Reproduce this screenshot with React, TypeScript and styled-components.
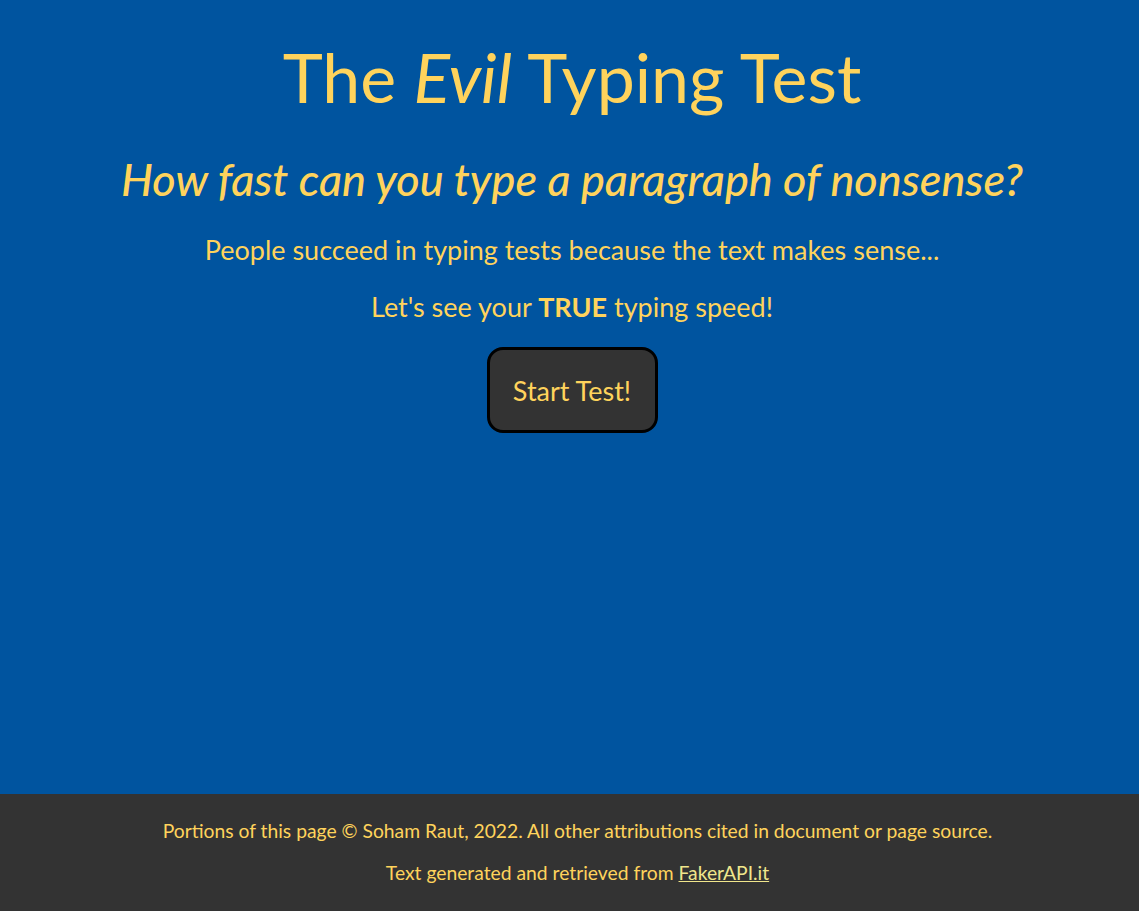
import React from "react";
import styled, { createGlobalStyle } from "styled-components";

const Global = createGlobalStyle`
  html, body { margin: 0; padding: 0; background: #333333; }
  body { font-family: Lato, "Open Sans", sans-serif; color: #ffd35c; }
`;

const Page = styled.div`
  display: flex;
  flex-direction: column;
  min-height: 911px;
`;

const Main = styled.main`
  background: #00549f;
  height: 794px;
  box-sizing: border-box;
  padding-left: 5px;
  display: flex;
  flex-direction: column;
  align-items: center;
  text-align: center;
`;

const Title = styled.h1`
  margin: 37px 0 0;
  font-size: 68px;
  font-weight: 400;
  line-height: 80px;
`;

const Subtitle = styled.h2`
  margin: 34px 0 0;
  font-size: 45px;
  font-style: italic;
  font-weight: 500;
  line-height: 56px;
`;

const Text = styled.p<{ $top: number }>`
  margin: ${(p) => p.$top}px 0 0;
  font-size: 27px;
  line-height: 30px;
`;

const Button = styled.button`
  margin-top: 25px;
  width: 171px;
  height: 86px;
  box-sizing: border-box;
  background: #333333;
  border: 3px solid #000;
  border-radius: 16px;
  color: #ffd35c;
  font-family: inherit;
  font-size: 27px;
  cursor: pointer;
`;

const Footer = styled.footer`
  flex: 1;
  background: #333333;
  display: flex;
  flex-direction: column;
  align-items: center;
  padding: 26px 0 0 16px;
  gap: 20px;
  font-size: 19.3px;
  line-height: 22px;
`;

const Link = styled.a`
  color: #f0e68c;
  text-decoration: underline;
`;

export default function App() {
  return (
    <Page>
      <Global />
      <Main>
        <Title>
          The <em>Evil</em> Typing Test
        </Title>
        <Subtitle>How fast can you type a paragraph of nonsense?</Subtitle>
        <Text $top={28}>People succeed in typing tests because the text makes sense...</Text>
        <Text $top={27}>
          Let's see your <b>TRUE</b> typing speed!
        </Text>
        <Button>Start Test!</Button>
      </Main>
      <Footer>
        <span>Portions of this page © Soham Raut, 2022. All other attributions cited in document or page source.</span>
        <span>
          Text generated and retrieved from <Link href="#">FakerAPI.it</Link>
        </span>
      </Footer>
    </Page>
  );
}
